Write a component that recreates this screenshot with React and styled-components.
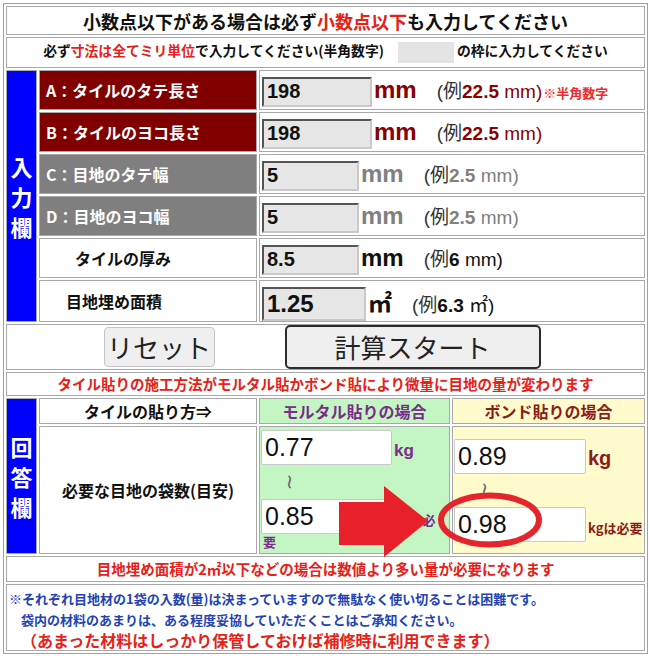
import React from 'react';
import styled, { createGlobalStyle } from 'styled-components';

const JP = `"Noto Sans CJK JP", "Noto Sans", sans-serif`;
const NUM = `"Liberation Sans", Arial, "Noto Sans CJK JP", sans-serif`;

const GlobalStyle = createGlobalStyle`
  *, *::before, *::after { box-sizing: border-box; }
  html, body { margin: 0; padding: 0; background: #fff; }
  body { font-family: ${JP}; color: #111; }
`;

const Page = styled.div`
  position: relative;
  width: 650px;
  height: 656px;
  padding: 3px;
`;

const Sheet = styled.table`
  width: 645px;
  table-layout: fixed;
  border-collapse: separate;
  border-spacing: 2px;
  border: 1px solid #a0a0a0;
`;

const Col = styled.col`
  width: ${p => p.$w}px;
`;

const Cell = styled.td`
  border: 1px solid #a8a8a8;
  padding: 0;
  height: ${p => p.$h}px;
  background: ${p => p.$bg || '#fff'};
  text-align: ${p => p.$align || 'left'};
  vertical-align: middle;
`;

const Title = styled(Cell)`
  font: 700 18px/1 ${JP};
  text-align: center;
`;

const Hint = styled(Cell)`
  font: 700 13.8px/1 ${JP};
  text-align: center;
`;

const Red = styled.span`
  color: #e62117;
`;

const GreyBox = styled.span`
  display: inline-block;
  width: 56px;
  height: 21px;
  margin: 0 3px 0 14px;
  background: #e4e4e4;
  vertical-align: middle;
`;

const Side = styled.td`
  border: 1px solid #a8a8a8;
  padding: 0;
  background: #0000ff;
  color: #fff;
  font: 700 22px/30px ${JP};
  text-align: center;
  vertical-align: middle;
`;

const SideChar = styled.span`
  display: block;
`;

const Label = styled.td`
  border: 1px solid #a8a8a8;
  height: 40px;
  padding: 0 0 0 ${p => p.$indent}px;
  background: ${p => p.$bg};
  color: ${p => p.$fg};
  font: 700 16px/1 ${JP};
  vertical-align: middle;
`;

const Value = styled.td`
  border: 1px solid #a8a8a8;
  padding: 3px 0 0 2px;
  vertical-align: middle;
`;

const ValueRow = styled.div`
  display: flex;
  align-items: baseline;
`;

const Field = styled.input`
  width: ${p => p.$w}px;
  height: ${p => p.$h}px;
  padding: 0 0 0 3px;
  background: #e6e6e6;
  border: 2px solid;
  border-color: #555 #c9c9c9 #c9c9c9 #555;
  color: #111;
  font: 700 ${p => p.$fs}px ${NUM};
  outline: none;
`;

const Unit = styled.span`
  margin-left: 2px;
  color: ${p => p.$tone};
  font: 700 24px ${NUM};
`;

const Example = styled.span`
  margin-left: 20px;
  color: #333;
  font: 400 19px ${NUM};
  white-space: nowrap;
`;

const ExampleValue = styled.span`
  color: ${p => p.$tone};
`;

const ExampleNum = styled.b`
  font-weight: 700;
`;

const HalfWidth = styled.span`
  margin-left: 1px;
  color: #f02a2a;
  font: 700 13px ${JP};
`;

const ButtonBar = styled.div`
  display: flex;
  justify-content: center;
  align-items: center;
  gap: 70px;
  padding-right: 7px;
`;

const Button = styled.button`
  width: ${p => p.$w}px;
  height: ${p => p.$h}px;
  padding: 0;
  background: #efefef;
  border: ${p => (p.$strong ? '2px solid #2b2b2b' : '1px solid #c4c4c4')};
  border-radius: ${p => (p.$strong ? 5 : 4)}px;
  color: #222;
  font: 400 26px/1 ${JP};
`;

const Notice = styled(Cell)`
  color: #e62117;
  font: 700 14.5px/1 ${JP};
  text-align: center;
`;

const Head = styled(Cell)`
  color: ${p => p.$fg};
  font: 700 16px/1 ${JP};
  text-align: center;
`;

const AnswerLabel = styled(Cell)`
  font: 700 16px/1 ${JP};
  text-align: center;
`;

const Answer = styled(Cell)`
  padding: 0 0 0 1px;
`;

const AmountLine = styled.div`
  display: flex;
  align-items: baseline;
`;

const Amount = styled.input`
  width: ${p => p.$w}px;
  height: 35px;
  padding: 0 0 0 3px;
  background: #fff;
  border: 1px solid #c9c9c9;
  border-radius: 2px;
  color: #111;
  font: 400 25px ${NUM};
  outline: none;
`;

const Kg = styled.span`
  margin-left: 2px;
  color: ${p => p.$tone};
  font: 700 ${p => p.$fs}px ${NUM};
`;

const Between = styled.div`
  display: flex;
  align-items: center;
  height: ${p => p.$h}px;
  padding-left: ${p => p.$indent}px;
`;

const Wave = styled.span`
  display: inline-block;
  transform: rotate(90deg);
  color: #666;
  font: 400 20px/1 "DejaVu Sans", ${NUM};
`;

const Need = styled.span`
  margin-left: 2px;
  color: ${p => p.$tone};
  font: 700 13px/16px ${JP};
  white-space: nowrap;
`;

const NeedWrap = styled.div`
  padding-left: 2px;
  color: ${p => p.$tone};
  font: 700 13px/16px ${JP};
`;

const Notes = styled(Cell)`
  padding: 3px 0 0 2px;
  vertical-align: top;
`;

const NoteLine = styled.div`
  padding-left: ${p => p.$indent || 0}px;
  color: #2343b5;
  font: 700 13px/21px ${JP};
  white-space: nowrap;
`;

const KeepLine = styled.div`
  padding-left: 12px;
  color: #e62117;
  font: 700 16px/20px ${JP};
  white-space: nowrap;
`;

const Overlay = styled.svg`
  position: absolute;
  left: 330px;
  top: 480px;
  width: 220px;
  height: 82px;
  pointer-events: none;
`;

const inputRows = [
  { label: 'A：タイルのタテ長さ', bg: '#800000', fg: '#fff', indent: 6, value: '198', w: 110, h: 30, fs: 20, unit: 'mm', tone: '#8b0000', ex: '22.5', note: '※半角数字' },
  { label: 'B：タイルのヨコ長さ', bg: '#800000', fg: '#fff', indent: 6, value: '198', w: 110, h: 30, fs: 20, unit: 'mm', tone: '#8b0000', ex: '22.5' },
  { label: 'C：目地のタテ幅', bg: '#7f7f7f', fg: '#fff', indent: 6, value: '5', w: 97, h: 30, fs: 20, unit: 'mm', tone: '#808080', ex: '2.5' },
  { label: 'D：目地のヨコ幅', bg: '#7f7f7f', fg: '#fff', indent: 6, value: '5', w: 97, h: 30, fs: 20, unit: 'mm', tone: '#808080', ex: '2.5' },
  { label: 'タイルの厚み', bg: '#fff', fg: '#111', indent: 35, value: '8.5', w: 97, h: 30, fs: 20, unit: 'mm', tone: '#111', ex: '6' },
  { label: '目地埋め面積', bg: '#fff', fg: '#111', indent: 26, value: '1.25', w: 104, h: 34, fs: 24, unit: '㎡', tone: '#111', ex: '6.3' },
];

function InputRow({ row, first }) {
  return (
    <tr>
      {first && (
        <Side rowSpan={inputRows.length}>
          <SideChar>入</SideChar>
          <SideChar>力</SideChar>
          <SideChar>欄</SideChar>
        </Side>
      )}
      <Label $bg={row.bg} $fg={row.fg} $indent={row.indent}>{row.label}</Label>
      <Value colSpan={2}>
        <ValueRow>
          <Field $w={row.w} $h={row.h} $fs={row.fs} value={row.value} readOnly />
          <Unit $tone={row.tone}>{row.unit}</Unit>
          <Example>
            (例
            <ExampleValue $tone={row.tone}>
              <ExampleNum>{row.ex}</ExampleNum> {row.unit})
            </ExampleValue>
          </Example>
          {row.note && <HalfWidth>{row.note}</HalfWidth>}
        </ValueRow>
      </Value>
    </tr>
  );
}

export default function App() {
  return (
    <Page>
      <GlobalStyle />
      <Sheet>
        <colgroup>
          <Col $w={31} />
          <Col $w={218} />
          <Col $w={191} />
          <Col $w={193} />
        </colgroup>
        <tbody>
          <tr>
            <Title colSpan={4} $h={29}>
              小数点以下がある場合は必ず<Red>小数点以下</Red>も入力してください
            </Title>
          </tr>
          <tr>
            <Hint colSpan={4} $h={31}>
              必ず<Red>寸法は全てミリ単位</Red>で入力してください(半角数字)
              <GreyBox />
              の枠に入力してください
            </Hint>
          </tr>
          {inputRows.map((row, i) => (
            <InputRow key={row.label} row={row} first={i === 0} />
          ))}
          <tr>
            <Cell colSpan={4} $h={44}>
              <ButtonBar>
                <Button $w={111} $h={40}>リセット</Button>
                <Button $w={256} $h={44} $strong>計算スタート</Button>
              </ButtonBar>
            </Cell>
          </tr>
          <tr>
            <Notice colSpan={4} $h={24}>
              タイル貼りの施工方法がモルタル貼かボンド貼により微量に目地の量が変わります
            </Notice>
          </tr>
          <tr>
            <Side rowSpan={2}>
              <SideChar>回</SideChar>
              <SideChar>答</SideChar>
              <SideChar>欄</SideChar>
            </Side>
            <Head $h={26} $fg="#111">タイルの貼り方⇒</Head>
            <Head $h={26} $fg="#7d2a8c" $bg="#c3f6c3">モルタル貼りの場合</Head>
            <Head $h={26} $fg="#8b1a1a" $bg="#fffbcc">ボンド貼りの場合</Head>
          </tr>
          <tr>
            <AnswerLabel $h={128}>必要な目地の袋数(目安)</AnswerLabel>
            <Answer $h={128} $bg="#c3f6c3">
              <AmountLine>
                <Amount $w={131} value="0.77" readOnly />
                <Kg $tone="#7d2a8c" $fs={17}>kg</Kg>
              </AmountLine>
              <Between $h={34} $indent={21}><Wave>~</Wave></Between>
              <AmountLine>
                <Amount $w={131} value="0.85" readOnly />
                <Need $tone="#7d2a8c">kgは必</Need>
              </AmountLine>
              <NeedWrap $tone="#7d2a8c">要</NeedWrap>
            </Answer>
            <Answer $h={128} $bg="#fffbcc">
              <AmountLine>
                <Amount $w={132} value="0.89" readOnly />
                <Kg $tone="#8b1a1a" $fs={20}>kg</Kg>
              </AmountLine>
              <Between $h={33} $indent={23}><Wave>~</Wave></Between>
              <AmountLine>
                <Amount $w={132} value="0.98" readOnly />
                <Need $tone="#8b1a1a">kgは必要</Need>
              </AmountLine>
            </Answer>
          </tr>
          <tr>
            <Notice colSpan={4} $h={26}>
              目地埋め面積が2㎡以下などの場合は数値より多い量が必要になります
            </Notice>
          </tr>
          <tr>
            <Notes colSpan={4} $h={67}>
              <NoteLine>※それぞれ目地材の1袋の入数(量)は決まっていますので無駄なく使い切ることは困難です。</NoteLine>
              <NoteLine $indent={12}>袋内の材料のあまりは、ある程度妥協していただくことはご承知ください。</NoteLine>
              <KeepLine>（あまった材料はしっかり保管しておけば補修時に利用できます）</KeepLine>
            </Notes>
          </tr>
        </tbody>
      </Sheet>
      <Overlay viewBox="0 0 220 82">
        <polygon points="9,22 54,22 54,6 98,41 54,77 54,65 9,65" fill="#e8202a" />
        <ellipse cx="160" cy="40" rx="49" ry="24.5" fill="none" stroke="#e4262c" strokeWidth="6" />
      </Overlay>
    </Page>
  );
}
